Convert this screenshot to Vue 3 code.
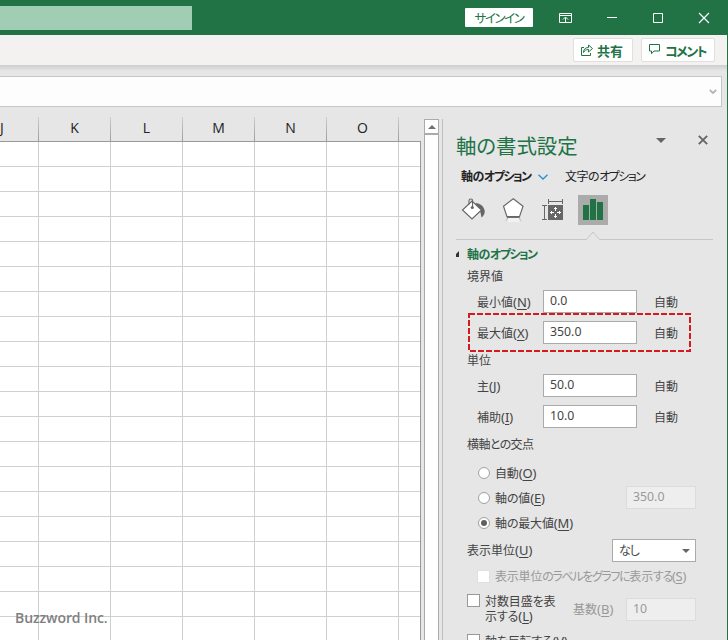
<script setup>
const columns = ['J', 'K', 'L', 'M', 'N', 'O', '']
const rowCount = 20
const bounds = [
  { label: '最小値', key: 'N', value: '0.0' },
  { label: '最大値', key: 'X', value: '350.0', marked: true },
]
const units = [
  { label: '主', key: 'J', value: '50.0' },
  { label: '補助', key: 'I', value: '10.0' },
]
const crossings = [
  { label: '自動', key: 'O' },
  { label: '軸の値', key: 'E', value: '350.0' },
  { label: '軸の最大値', key: 'M', checked: true },
]
</script>

<template>
  <div class="window">
    <header class="titlebar">
      <div class="search"></div>
      <div class="signin"><span>サインイン</span></div>
      <svg class="ribbon-icon" width="14" height="12" viewBox="0 0 14 12" fill="none" stroke="#fff"><path d="M.5 1.500h12v9H.5zM.5 3.500h12M6.500 10V5.500M4 7.500l2.500-2.500L9 7.500" /></svg>
      <svg class="min-icon" width="10" height="12" viewBox="0 0 10 12" stroke="#fff"><path d="M0 5.500h10" /></svg>
      <svg class="max-icon" width="10" height="12" viewBox="0 0 10 12" fill="none" stroke="#fff"><path d="M.5 1.500h9v9h-9z" /></svg>
      <svg class="close-icon" width="12" height="12" viewBox="0 0 12 12" fill="none" stroke="#fff" stroke-width="1.200"><path d="M1 1l10 10M11 1L1 11" /></svg>
    </header>

    <div class="actions">
      <div class="action share">
        <svg width="13" height="12" viewBox="0 0 13 12" fill="none" stroke="#217346"><path d="M3 3.500H.500v8h9V9M2.500 8.500C2.500 5 4.500 3.500 7.500 3.500V1l4 3.500-4 3.500V5.500C5 5.500 3.500 6.500 2.500 8.500z" /></svg>
        <span>共有</span>
      </div>
      <div class="action comment">
        <svg width="12" height="11" viewBox="0 0 12 11" fill="none" stroke="#217346"><path d="M.5.500h10v6.500H5L2.500 9.800V7H.500z" /></svg>
        <span>コメント</span>
      </div>
    </div>

    <div class="formula-wrap">
      <div class="formula">
        <svg width="8" height="6" viewBox="0 0 8 6" fill="none" stroke="#b5b5b5" stroke-width="1.800"><path d="M.8 1l3.200 3L7.200 1" /></svg>
      </div>
    </div>

    <main class="body">
      <section class="sheet">
        <div class="col-heads">
          <div v-for="(c, i) in columns" :key="i" class="head">{{ c }}</div>
        </div>
        <div class="rows">
          <div v-for="r in rowCount" :key="r" class="row">
            <div v-for="(c, i) in columns" :key="i" class="cell"></div>
          </div>
        </div>
        <div class="watermark">Buzzword Inc.</div>
      </section>

      <div class="scroll">
        <div class="scroll-btn"><svg width="8" height="4" viewBox="0 0 8 4"><path d="M4 0l4 4H0z" fill="#707070" /></svg></div>
        <div class="scroll-thumb"></div>
      </div>

      <aside class="panel">
        <div class="title-row">
          <h1>軸の書式設定</h1>
          <svg class="title-menu" width="10" height="5" viewBox="0 0 10 5"><path d="M0 0h10L5 5z" fill="#666" /></svg>
          <svg class="title-close" width="10" height="10" viewBox="0 0 10 10" stroke="#666" stroke-width="1.900"><path d="M.8.800l8.400 8.400M9.200.800L.8 9.200" /></svg>
        </div>
        <div class="tabs">
          <b class="tab-axis">軸の<span class="kana">オプション</span></b>
          <svg width="10" height="6" viewBox="0 0 10 6" fill="none" stroke="#2e8fd0" stroke-width="1.300"><path d="M.5.700L5 5l4.500-4.300" /></svg>
          <span class="tab-text">文字の<span class="kana">オプション</span></span>
        </div>
        <div class="icons">
          <div class="tool">
            <svg width="30" height="30" viewBox="0 0 30 30" fill="none">
              <path d="M17.500 8c5 .5 8 3 9.200 7.500.3 3-1 5.500-3.200 7l-1-5z" fill="#666" />
              <path d="M14 6l9.500 9-9.500 9L4.500 15z" fill="#fff" stroke="#666" stroke-width="1.200" />
              <path d="M11 9.500V5.500q0-1.500 1.800-1.500t1.700 1.500V12" stroke="#666" stroke-width="1.100" />
              <circle cx="14.300" cy="12.500" r="1.600" fill="#666" />
            </svg>
          </div>
          <div class="tool">
            <svg width="30" height="30" viewBox="0 0 30 30" fill="none">
              <defs><linearGradient id="reflection" x1="0" y1="0" x2="0" y2="1"><stop offset="0" stop-color="#aaa" /><stop offset="1" stop-color="#e6e6e6" /></linearGradient></defs>
              <path d="M9 23h13l2 4H7z" fill="url(#reflection)" />
              <path d="M10 23h11l1 4H9z" fill="#f2f2f2" />
              <path d="M15.300 3.700l9.700 7.500-3.500 10.500H9L5.500 11.200z" fill="#fff" stroke="#6a6a6a" stroke-width="1.200" />
              <path d="M9 22h12.500" stroke="#666" stroke-width="1.800" />
            </svg>
          </div>
          <div class="tool">
            <svg width="30" height="30" viewBox="0 0 30 30" fill="none" stroke="#666">
              <path d="M10.500 4v5M24.500 4v5M10.500 6.500h14M4 10.500h5M4 24.500h5M6.500 10.500v14" />
              <rect x="10" y="10" width="15" height="15" fill="#666" stroke="none" />
              <path d="M17.500 12v4M17.500 19v4M12 17.500h4M19 17.500h4M16 13.500h3M16 21.500h3M13.500 16v3M21.500 16v3" stroke="#fff" />
            </svg>
          </div>
          <div class="tool active">
            <svg width="30" height="30" viewBox="0 0 30 30" fill="#217346"><path d="M5 10h6v15H5zM12 4h6v21h-6zM19 7h6v18h-6z" /></svg>
          </div>
        </div>
        <svg class="divider" width="257" height="15" viewBox="0 0 257 15" fill="none" stroke="#c6c6c6"><path d="M0 14.500h130.500l6.500-7.500 6.500 7.500H257" /></svg>

        <div class="section-title">
          <svg width="4" height="6" viewBox="0 0 4 6"><path d="M3 0v6H0V3z" fill="#333" /></svg>
          <b>軸の<span class="kana">オプション</span></b>
        </div>

        <div class="group g-bounds"><span>境界値</span></div>
        <div v-for="f in bounds" :key="f.key" class="field">
          <label>{{ f.label }}<span class="key">(<u>{{ f.key }}</u>)</span></label>
          <div class="input">{{ f.value }}</div>
          <span class="auto">自動</span>
          <div v-if="f.marked" class="highlight">
            <svg width="224" height="40" viewBox="0 0 224 40" fill="none"><rect x="1" y="1" width="221" height="37" stroke="#d01c1f" stroke-width="2" stroke-dasharray="6 2" /></svg>
          </div>
        </div>

        <div class="group g-units"><span>単位</span></div>
        <div v-for="f in units" :key="f.key" class="field">
          <label>{{ f.label }}<span class="key">(<u>{{ f.key }}</u>)</span></label>
          <div class="input">{{ f.value }}</div>
          <span class="auto">自動</span>
        </div>

        <div class="group g-cross"><span class="cross-label">横軸との交点</span></div>
        <div v-for="c in crossings" :key="c.key" class="radio-row">
          <i class="radio" :class="{ checked: c.checked }"></i>
          <span class="radio-label">{{ c.label }}<span class="key">(<u>{{ c.key }}</u>)</span></span>
          <div v-if="c.value" class="input disabled">{{ c.value }}</div>
        </div>

        <div class="unit-row">
          <span>表示単位<span class="key">(<u>U</u>)</span></span>
          <div class="select"><span>なし</span><svg width="8" height="4" viewBox="0 0 8 4"><path d="M0 0h8L4 4z" fill="#666" /></svg></div>
        </div>
        <div class="label-check">
          <i class="check faint"></i>
          <span>表示単位<span class="tight">のラベルをグラフに</span>表示<span class="tight">する</span><span class="key">(<u>S</u>)</span></span>
        </div>
        <div class="log-row">
          <i class="check"></i>
          <div class="log-label"><div>対数目盛を表</div><div>示する<span class="key">(<u>L</u>)</span></div></div>
          <span class="base-label">基数<span class="key">(<u>B</u>)</span></span>
          <div class="input disabled">10</div>
        </div>
        <div class="reverse-row">
          <i class="check"></i>
          <span>軸を反転する<span class="key">(<u>V</u>)</span></span>
        </div>
      </aside>
    </main>
  </div>
</template>

<style>
body {
  margin: 0;
  overflow: hidden;
}
</style>

<style scoped>
* {
  box-sizing: border-box;
}
.window {
  width: 728px;
  height: 640px;
  overflow: hidden;
  display: flex;
  flex-direction: column;
  background: #e6e6e6;
  border-right: 1px solid #217346;
  font-family: "Noto Sans", "Noto Sans CJK JP", sans-serif;
  font-size: 12px;
  color: #444;
  font-feature-settings: "palt";
  white-space: nowrap;
}
svg {
  display: block;
  flex: none;
}
.titlebar {
  flex: none;
  height: 35px;
  background: #217346;
  display: flex;
  align-items: center;
}
.search {
  width: 192px;
  height: 24px;
  background: #a0cdb4;
}
.signin {
  width: 68px;
  height: 19px;
  margin-left: 273px;
  margin-right: 26px;
  background: #fff;
  border-radius: 1px;
  color: #217346;
  display: flex;
  align-items: center;
  justify-content: center;
  letter-spacing: -1.4px;
  font-size: 12.5px;
}
.min-icon {
  margin-left: 34px;
}
.max-icon {
  margin-left: 36px;
}
.close-icon {
  margin-left: 35px;
}
.actions {
  flex: none;
  height: 30px;
  background: #f3f2f1;
  display: flex;
  justify-content: flex-end;
  align-items: center;
  gap: 8px;
  padding-right: 12px;
}
.action {
  height: 24px;
  display: flex;
  align-items: center;
  background: #fff;
  border: 1px solid #e1dfdd;
  border-radius: 2px;
  color: #217346;
  font-weight: 700;
  font-size: 13px;
}
.share {
  width: 60px;
  padding-left: 7px;
  gap: 3px;
}
.comment {
  width: 74px;
  padding-left: 7px;
  gap: 4px;
  letter-spacing: -1.5px;
}
.comment svg {
  margin-bottom: 2px;
}
.formula-wrap {
  flex: none;
  height: 42px;
  padding: 11px 5px 0 0;
  background: linear-gradient(#cfcdcd 0, #e6e6e6 6px);
}
.formula {
  height: 31px;
  background: #fdfdfd;
  border: 1px solid #c6c6c6;
  border-left: 0;
  display: flex;
  align-items: center;
  justify-content: flex-end;
  padding-right: 4px;
}
.body {
  flex: 1;
  display: flex;
  min-height: 0;
}
.sheet {
  width: 421px;
  flex: none;
  position: relative;
  overflow: hidden;
}
.col-heads,
.row {
  display: grid;
  grid-template-columns: 39px repeat(5, 72px) 21px;
}
.col-heads {
  height: 35px;
  padding-top: 10px;
  border-bottom: 1px solid #999;
}
.head {
  display: flex;
  align-items: center;
  justify-content: center;
  padding-bottom: 3px;
  font-family: "Open Sans", sans-serif;
  font-size: 14px;
  color: #222;
  border-right: 1px solid;
  border-image: linear-gradient(#d0d0d0, #999) 1;
}
.head:first-child {
  justify-content: flex-start;
}
.head:last-child {
  border: 0;
}
.rows {
  background: #fff;
  border-right: 1px solid #999;
}
.row {
  height: 25px;
}
.cell {
  border-right: 1px solid #d0d0d0;
  border-bottom: 1px solid #d0d0d0;
}
.cell:last-child {
  width: 21px;
  border-right: 0;
}
.watermark {
  position: absolute;
  left: 15px;
  bottom: 12px;
  font: 600 14px/20px "Open Sans", sans-serif;
  letter-spacing: -0.1px;
  color: #808080;
}
.scroll {
  width: 15px;
  margin: 12px 3px 0;
  flex: none;
  display: flex;
  flex-direction: column;
}
.scroll-btn {
  height: 15px;
  flex: none;
  background: #fff;
  border: 1px solid #ababab;
  display: flex;
  align-items: center;
  justify-content: center;
}
.scroll-thumb {
  flex: 1;
  background: #fff;
  border: 1px solid #ababab;
  border-bottom: 0;
}
.panel {
  flex: 1;
  margin-top: 12px;
  border-left: 1px solid #bdbdbd;
  line-height: 16px;
}
.title-row {
  height: 46px;
  display: flex;
  align-items: center;
  padding-left: 13px;
}
h1 {
  margin: 7px 0 0;
  font-size: 20.4px;
  line-height: 26px;
  font-weight: 400;
  color: #217346;
  width: 200px;
}
.title-menu {
  margin-bottom: 3px;
}
.title-close {
  margin: 0 0 5px 32px;
}
.tabs {
  height: 22px;
  display: flex;
  align-items: center;
  padding: 2px 0 0 18px;
  color: #222;
}
.kana {
  letter-spacing: -1.5px;
}
.tight {
  letter-spacing: -1.35px;
}
.key {
  font-size: 13px;
  line-height: 1;
}
.tab-axis {
  width: 77px;
  letter-spacing: -0.5px;
}
.tab-text {
  margin-left: 17px;
  letter-spacing: -0.5px;
}
.icons {
  display: flex;
  gap: 10px;
  padding: 8px 0 0 15px;
}
.tool {
  width: 30px;
  height: 30px;
}
.active {
  background: #ababab;
}
.divider {
  margin-left: 13px;
}
.section-title {
  height: 28px;
  display: flex;
  align-items: center;
  gap: 7px;
  padding: 2px 0 0 13px;
  color: #217346;
  letter-spacing: -0.5px;
}
.section-title svg {
  margin-bottom: 3px;
}
.group {
  padding-left: 24px;
}
.g-bounds {
  height: 18px;
  padding-top: 1px;
}
.g-units {
  height: 22px;
  padding-top: 5px;
}
.g-cross {
  height: 28px;
  padding-top: 5px;
  letter-spacing: -0.6px;
}
.field {
  position: relative;
  height: 31px;
  display: flex;
  align-items: center;
  padding-left: 34px;
}
.field label {
  width: 66px;
  padding-top: 2px;
}
.input {
  width: 94px;
  height: 23px;
  background: #fff;
  border: 1px solid #ababab;
  padding-left: 6px;
  line-height: 20px;
  font-size: 12.3px;
}
.auto {
  margin-left: 17px;
  padding-top: 2px;
}
u {
  text-underline-offset: 2px;
}
.highlight {
  position: absolute;
  left: 25px;
  top: -4px;
}
.radio-row {
  height: 25px;
  display: flex;
  align-items: center;
  padding-left: 35px;
}
.radio {
  width: 12px;
  height: 12px;
  border: 1px solid #a0a0a0;
  border-radius: 50%;
  background: #fff;
  display: flex;
}
.radio.checked::before {
  content: "";
  width: 6px;
  height: 6px;
  margin: auto;
  border-radius: 50%;
  background: #606060;
}
.radio-label {
  width: 131px;
  margin-left: 5px;
  padding-top: 2px;
  letter-spacing: -0.15px;
}
.input.disabled {
  width: 70px;
  background: #eee;
  border-color: #dcdcdc;
  color: #999;
}
.unit-row {
  height: 31px;
  display: flex;
  align-items: center;
  justify-content: space-between;
  padding: 0 31px 0 24px;
}
.select {
  width: 84px;
  height: 23px;
  background: #fff;
  border: 1px solid #ababab;
  display: flex;
  align-items: center;
  justify-content: space-between;
  padding: 0 5px 0 6px;
  letter-spacing: -1px;
}
.label-check {
  height: 22px;
  display: flex;
  align-items: center;
  gap: 5px;
  padding: 0 0 1px 34px;
  color: #999;
  letter-spacing: -0.2px;
}
.check {
  flex: none;
  width: 13px;
  height: 13px;
  background: #fff;
  border: 1px solid #999;
}
.check.faint {
  border-color: #e0e0e0;
}
.log-row {
  height: 42px;
  display: flex;
  padding: 6px 0 0 24px;
}
.log-label {
  width: 88px;
  margin-left: 5px;
  line-height: 15px;
  letter-spacing: -0.1px;
}
.base-label {
  width: 53px;
  margin-top: 8px;
  color: #999;
}
.log-row .input {
  margin-top: 4px;
}
.reverse-row {
  display: flex;
  gap: 5px;
  padding: 4px 0 0 24px;
  letter-spacing: -0.2px;
}
</style>
